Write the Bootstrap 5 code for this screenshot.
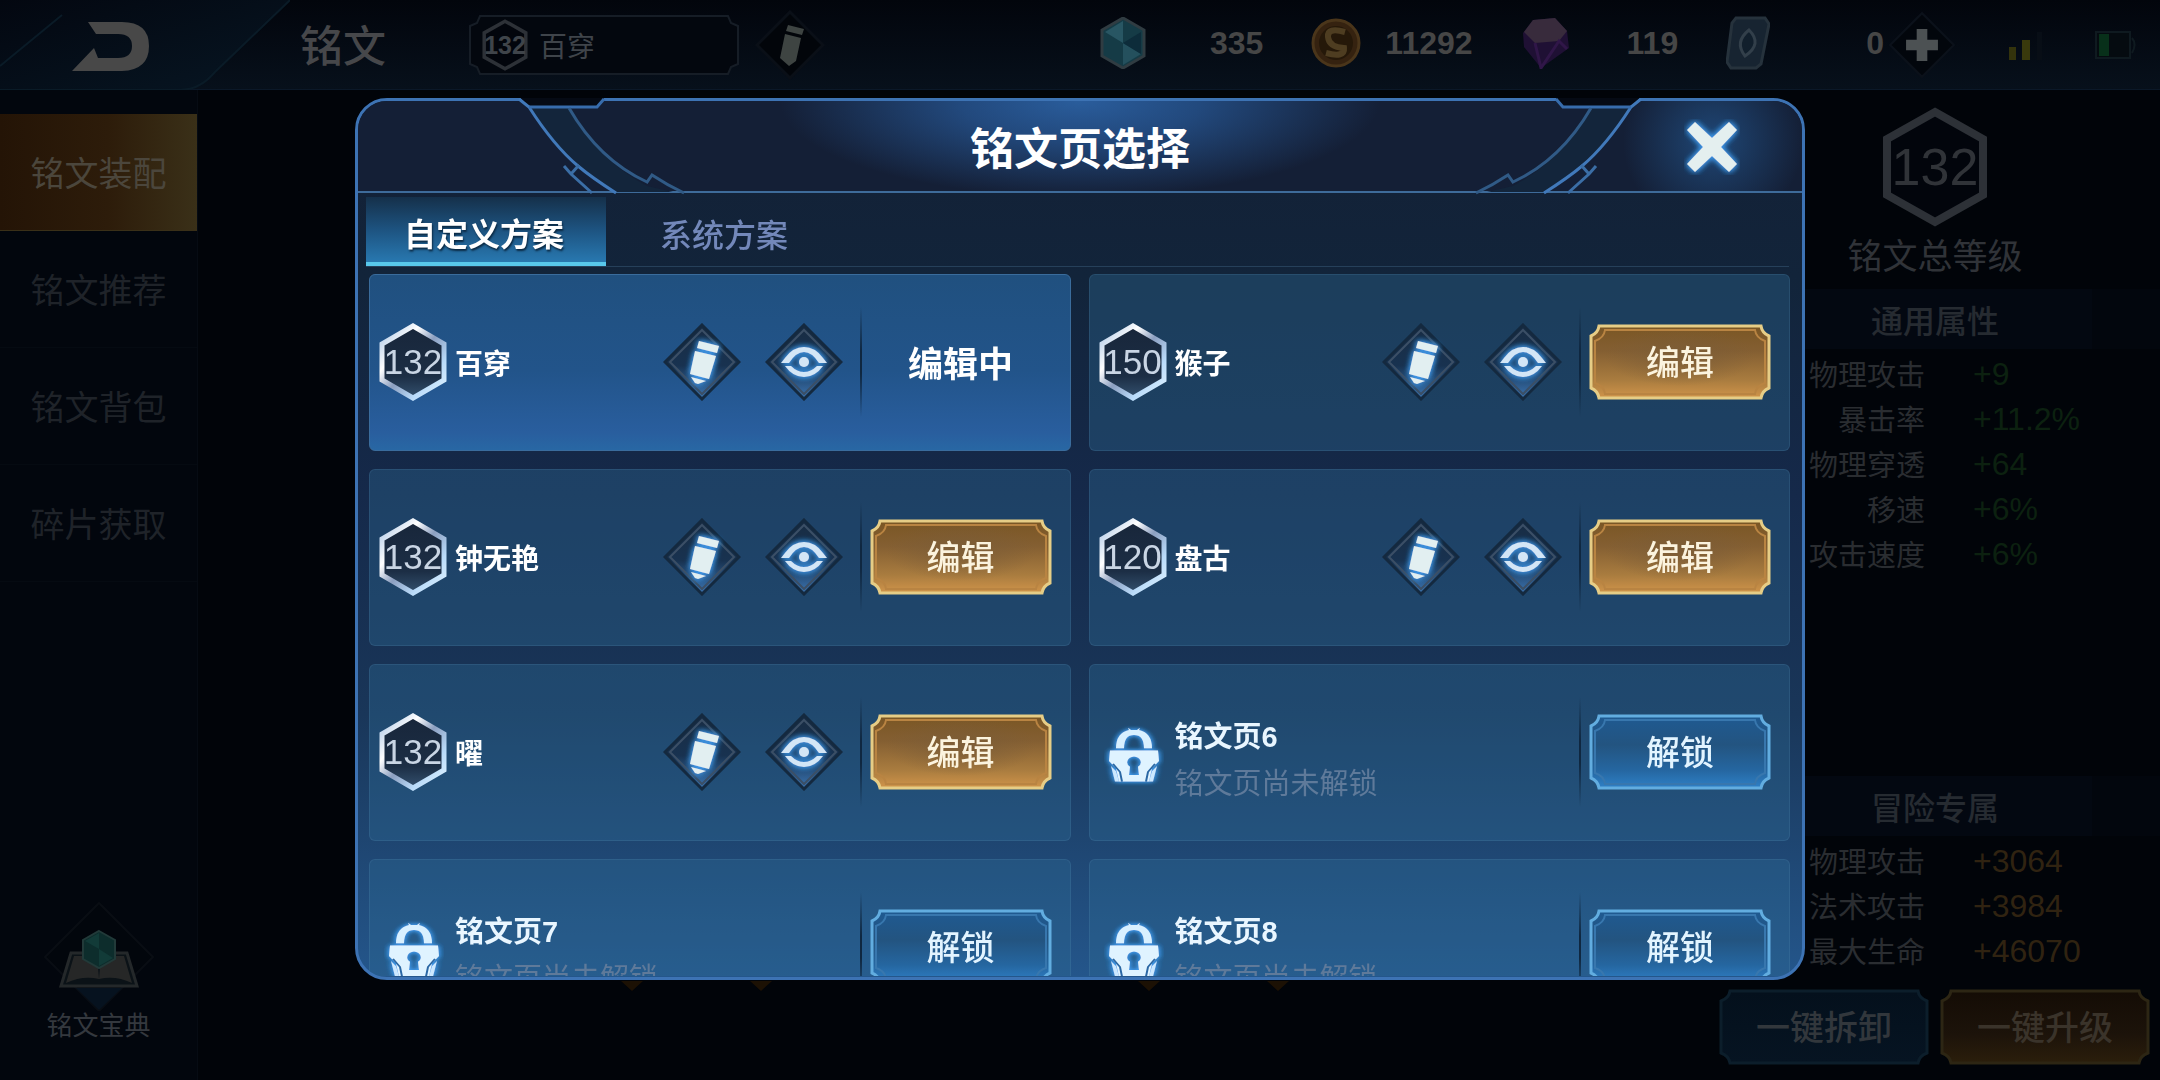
<!DOCTYPE html>
<html lang="zh-CN">
<head>
<meta charset="utf-8">
<meta name="viewport" content="width=device-width, initial-scale=1">
<title>铭文页选择</title>
<link rel="stylesheet" href="https://cdn.jsdelivr.net/npm/bootstrap@5.3.0/dist/css/bootstrap.min.css">
<style>
:root { --cjk: "Noto Sans CJK SC", sans-serif; --latin: "Liberation Sans", "Noto Sans CJK SC", sans-serif; }
body { background: #010409; font-family: var(--cjk); color: #34373b; overflow: hidden; }
svg { display: block; flex: none; }
button { font-family: inherit; }
.btn-plain { background: none; border: 0; padding: 0; color: inherit; }

/* top bar */
.topbar { height: 90px; background: linear-gradient(#02050c, #07101b); border-bottom: 1px solid #0b1828; position: relative; }
.back-link { width: 300px; height: 90px; }
.page-title { font-size: 43px; line-height: 60px; font-weight: 500; color: #46474a; margin: 0 0 4px; width: 169px; }
.page-pick { width: 270px; height: 60px; position: relative; margin-right: 16px; padding-left: 12px; }
.page-pick > svg:first-child { position: absolute; left: 0; top: 0; }
.pick-input { position: relative; background: none; border: 0; color: #3f444a; font-size: 28px; line-height: 40px; width: 170px; padding: 0; margin-left: 10px; outline: 0; }
.level-hex { position: relative; display: flex; align-items: center; justify-content: center; flex: none; }
.level-hex svg { position: absolute; left: 0; top: 0; }
.level-hex span { position: relative; font-family: var(--latin); white-space: nowrap; }
.hex-s { width: 48px; height: 52px; } .hex-s span { font-size: 25px; line-height: 28px; font-weight: 700; color: #3f444a; }
.wallet { font: 700 32px/40px var(--latin); color: #464646; padding-bottom: 4px; }
.coin { display: flex; align-items: center; justify-content: space-between; }
.status { width: 276px; padding-left: 35px; }

/* side menu */
.side-menu { width: 198px; padding-top: 24px; border-right: 1px solid #060b13; background: #02060d; }
.side-menu a { height: 117px; font-size: 34px; line-height: 48px; color: #1f2329; text-decoration: none; display: flex; align-items: center; justify-content: center; border-bottom: 1px solid #050a11; }
.side-menu a.active { background: linear-gradient(90deg, #241406, #2d1c0a 55%, #3a3018); color: #4b463c; border-color: #3a3018; }
.side-menu a.codex { margin-top: auto; height: auto; font-size: 26px; line-height: 36px; color: #34383e; border: 0; flex-direction: column; margin-bottom: 38px; }
.codex svg { margin-bottom: -5px; }

/* rune tray behind the dialog */
.rune-tray { padding: 0 66px 89px 0; }

/* attribute panel */
.attr-panel { width: 382px; padding: 17px 0 15px; }
.attr-head { width: 314px; }
.hex-l { width: 106px; height: 120px; } .hex-l span { font-size: 52px; line-height: 60px; color: #303338; }
.total-label { font-size: 35px; line-height: 50px; color: #303338; margin-top: 2px; margin-bottom: 2px; }
.sect { font-size: 32px; line-height: 46px; padding: 7px 0; width: 314px; color: #262b31; background: #030811; margin: 0 0 2px; text-align: center; box-shadow: 68px 0 #02060d; }
.attr-row { display: flex; height: 45px; align-items: center; font-size: 29px; }
.attr-row dt { width: 147px; text-align: right; font-weight: 400; color: #2a2d31; }
.attr-row dd { margin: 0 0 0 48px; font: 32px/40px var(--latin); color: #0c2110; }
.attr-row.gold dd { color: #302311; }
.sect-low { margin-top: 200px; }
.foot-row { margin-top: auto; gap: 11px; margin-left: -59px; }

/* framed buttons */
.frame-btn { position: relative; width: 182px; height: 76px; border: 0; padding: 0 0 2px; background: none; font-size: 34px; line-height: 48px; font-weight: 500; color: #fbf3de; flex: none; }
.frame-btn svg { position: absolute; inset: 0; width: 100%; height: 100%; }
.frame-btn span { position: relative; }
.frame-btn.blue { color: #e2f4ff; }
.frame-btn.dim { width: 210px; color: #32373c; }
.frame-btn.dim.gold { color: #3a332a; }

/* dialog */
.overlay { position: fixed; inset: 0; padding: 98px 24px 0; z-index: 10; }
.rune-dialog { position: relative; width: 100%; max-width: 1450px; height: calc(100vh - 198px); margin: 0 auto; border: 3px solid #3d73b4; border-radius: 32px; overflow: hidden; display: flex; flex-direction: column;
  background: linear-gradient(#132036 0, #12243a 20%, #15294a 45%, #193659 70%, #24568b 100%); }
.frame-wrap { position: relative; max-width: 1450px; margin: 0 auto; }
.decor { position: absolute; top: 0; z-index: 2; pointer-events: none; }
.decor-l { left: 0; } .decor-r { right: 0; }
.dlg-head { height: 92px; flex: none; position: relative; border-bottom: 2px solid #3e6b9a;
  background: radial-gradient(ellipse 300px 96px at 50% 0, #2a5d9c 0, #22497d 40%, transparent 100%), radial-gradient(ellipse 90px 90px at 1355px 40px, #1f4776, transparent), #141f36; }
.dlg-head h2 { font-size: 44px; line-height: 60px; font-weight: 700; color: #fff; margin: 0; }
.close-x { position: absolute; right: 62px; top: 18px; width: 56px; height: 56px; }
.plan-tabs { margin: 4px 13px 0 8px; border-bottom: 1px solid #26405a; flex: none; }
.plan-tabs button { height: 69px; width: 240px; font-size: 32px; line-height: 46px; color: #7388ba; font-weight: 500; border: 0; background: none; padding: 2px 4px 0 0; }
.plan-tabs button.active { color: #fff; font-weight: 700; background: linear-gradient(#15304a, #1d5380 50%, #2878b0); border-bottom: 4px solid #58c8ec; padding-top: 5px; text-shadow: 1px 2px 2px #0b2a44; }
.plan-list { margin: 7px 12px 1px 11px; overflow: hidden; flex: 1; min-height: 0; display: grid; grid-template-columns: 1fr 1fr; grid-auto-rows: 177px; gap: 18px; }
.plan { border-radius: 6px; border: 1px solid rgba(90,140,180,.2); background: rgba(44,104,146,.38); display: flex; align-items: center; padding: 0 18px 2px 8px; color: #fff; }
.plan.current { background: linear-gradient(#20507f, #22548a 55%, #295e9e 90%, #2867a4); border-color: #3a6c9c; }
.plan.locked { padding-left: 14px; }
.hex-m { width: 70px; height: 78px; } .hex-m span { font-size: 35px; line-height: 40px; color: #c9d5e4; }
.plan-name { font-size: 28px; line-height: 40px; font-weight: 700; margin-left: 7px; }
.plan-lock { margin: 6px 7px 0 0; }
.plan.locked .lock-text { padding-top: 14px; }
.plan.locked .plan-name { font-size: 29px; line-height: 42px; margin: 0; color: #e9f6ff; font-family: var(--latin); }
.plan-note { font-size: 29px; line-height: 42px; color: #5f7a9a; margin-top: 2px; }
.plan-rule { width: 2px; height: 110px; margin: 0 8px 0 17px; background: linear-gradient(transparent, #0f2740 40%, #0f2740 60%, transparent); flex: none; }
.plan-state { width: 182px; text-align: center; font-size: 35px; line-height: 50px; font-weight: 700; }
.icon-pair { gap: 24px; }
</style>
<script src="https://cdn.jsdelivr.net/npm/bootstrap@5.3.0/dist/js/bootstrap.bundle.min.js"></script>
</head>
<body>
<svg width="0" height="0" class="position-absolute" aria-hidden="true">
  <defs>
    <linearGradient id="silver" x1="0" y1="0" x2="1" y2="1"><stop offset="0" stop-color="#a9c4e4"/><stop offset=".3" stop-color="#fff"/><stop offset=".5" stop-color="#8c9fc0"/><stop offset=".75" stop-color="#b9dbfa"/><stop offset="1" stop-color="#e3f4ff"/></linearGradient>
    <linearGradient id="hexin" x1="0" y1="0" x2="0" y2="1"><stop offset="0" stop-color="#18263a"/><stop offset=".7" stop-color="#1c2e45"/><stop offset="1" stop-color="#34516f"/></linearGradient>
    <linearGradient id="diaFill" x1="0" y1="0" x2="0" y2="1"><stop offset="0" stop-color="#182c43"/><stop offset=".55" stop-color="#183250"/><stop offset="1" stop-color="#3c76b4"/></linearGradient>
    <linearGradient id="goldFill" x1="0" y1="0" x2="0" y2="1"><stop offset="0" stop-color="#7a5624"/><stop offset=".35" stop-color="#845f32"/><stop offset=".75" stop-color="#a97c3f"/><stop offset="1" stop-color="#d0944a"/></linearGradient>
    <radialGradient id="goldDark"><stop offset="0" stop-color="#7a5c38" stop-opacity=".8"/><stop offset="1" stop-color="#7a5c38" stop-opacity="0"/></radialGradient>
    <linearGradient id="blueFill" x1="0" y1="0" x2="0" y2="1"><stop offset="0" stop-color="#1f5a92"/><stop offset=".4" stop-color="#235480"/><stop offset=".75" stop-color="#2566a0"/><stop offset="1" stop-color="#2f80c6"/></linearGradient>
    <linearGradient id="goldDim" x1="0" y1="0" x2="0" y2="1"><stop offset="0" stop-color="#140c05"/><stop offset=".6" stop-color="#1c130a"/><stop offset="1" stop-color="#2b1e0b"/></linearGradient>
    <linearGradient id="blueDim" x1="0" y1="0" x2="0" y2="1"><stop offset="0" stop-color="#04101c"/><stop offset="1" stop-color="#061422"/></linearGradient>
    <linearGradient id="backFill" x1="0" y1="0" x2="1" y2="1"><stop offset="0" stop-color="#030710"/><stop offset="1" stop-color="#071623"/></linearGradient>
    <filter id="glow" x="-40%" y="-40%" width="180%" height="180%"><feGaussianBlur stdDeviation="3" result="b"/><feMerge><feMergeNode in="b"/><feMergeNode in="SourceGraphic"/></feMerge></filter>
    <filter id="blueGlow" x="-40%" y="-40%" width="180%" height="180%"><feGaussianBlur stdDeviation="3" result="b"/><feFlood flood-color="#3f9cf0"/><feComposite in2="b" operator="in" result="c"/><feMerge><feMergeNode in="c"/><feMergeNode in="c"/><feMergeNode in="SourceGraphic"/></feMerge></filter>
    <symbol id="hex" viewBox="0 0 70 78"><path d="M35 3 66 21V57L35 75 4 57V21Z" fill="url(#hexin)" stroke="url(#silver)" stroke-width="5"/></symbol>
    <symbol id="hexDim" viewBox="0 0 106 120"><path d="M53 5 101 32V88L53 115 5 88V32Z" fill="#02050c" stroke="#2d3137" stroke-width="8"/></symbol>
    <symbol id="pencil" viewBox="0 0 78 78"><path d="M39 2 76 39 39 76 2 39Z" fill="url(#diaFill)" stroke="#14293f" stroke-width="3"/><path d="M39 7 71 39 39 71 7 39Z" fill="none" stroke="#3b4f66" stroke-width="2"/><g fill="#e2eff1" filter="url(#blueGlow)"><path d="M36 18 56 23 54 30 34 25Z"/><path d="M32 28 53 33 46 56 27 51Z"/><path d="M28 54 43 58 35 61 32 60Z"/></g></symbol>
    <symbol id="eye" viewBox="0 0 78 78"><path d="M39 2 76 39 39 76 2 39Z" fill="url(#diaFill)" stroke="#14293f" stroke-width="3"/><path d="M39 7 71 39 39 71 7 39Z" fill="none" stroke="#3b4f66" stroke-width="2"/><g fill="#d3e6f6" filter="url(#blueGlow)"><circle cx="39" cy="39" r="5"/><path d="M16 40 20 35Q28 24 39 24T58 35L62 40H54Q47 29 39 29T24 40Z"/><path d="M20 43H26Q32 49 39 49T52 43H58Q50 54 39 54T20 43Z"/></g></symbol>
    <symbol id="lock" viewBox="0 0 60 84" preserveAspectRatio="none"><g filter="url(#blueGlow)"><path d="M12 33Q12 12 25 8L24 5 22 3 27 8H33L38 3 36 5 35 8Q48 12 48 33H40Q40 15 30 15T20 33Z" fill="#d8f0ff"/><path fill="#dff3ff" fill-rule="evenodd" d="M6 36H54L55 50 48 60 45 78H15L12 60 5 50ZM30 44A8 8 0 0 0 26 58L25 69H35L34 58A8 8 0 0 0 30 44Z"/><path d="M7 57 12 64 15 78H11ZM53 57 48 64 45 78H49Z" fill="#cbe8ff"/></g><path d="M9 54 16 65 18 78M51 54 44 65 42 78" fill="none" stroke="#2a67a4" stroke-width="2"/></symbol>
    <symbol id="goldFrame" viewBox="0 0 182 76" preserveAspectRatio="none"><path d="M10 2H172Q173 9 180 12V64Q173 67 172 74H10Q9 67 2 64V12Q9 9 10 2Z" fill="url(#goldFill)" stroke="#e6cd86" stroke-width="3"/><ellipse cx="91" cy="32" rx="75" ry="30" fill="url(#goldDark)"/><path d="M16 6H166Q167 14 176 17V59Q167 62 166 70H16Q15 62 6 59V17Q15 14 16 6Z" fill="none" stroke="#b98442" stroke-width="2"/></symbol>
    <symbol id="blueFrame" viewBox="0 0 182 76" preserveAspectRatio="none"><path d="M10 2H172Q173 9 180 12V64Q173 67 172 74H10Q9 67 2 64V12Q9 9 10 2Z" fill="url(#blueFill)" stroke="#62ade0" stroke-width="3"/><path d="M16 6H166Q167 14 176 17V59Q167 62 166 70H16Q15 62 6 59V17Q15 14 16 6Z" fill="none" stroke="#3877ae" stroke-width="2"/></symbol>
    <symbol id="goldFrameDim" viewBox="0 0 210 76" preserveAspectRatio="none"><path d="M11 2H199Q200 9 208 12V64Q200 67 199 74H11Q10 67 2 64V12Q10 9 11 2Z" fill="url(#goldDim)" stroke="#2d2614" stroke-width="3"/></symbol>
    <symbol id="blueFrameDim" viewBox="0 0 210 76" preserveAspectRatio="none"><path d="M11 2H199Q200 9 208 12V64Q200 67 199 74H11Q10 67 2 64V12Q10 9 11 2Z" fill="url(#blueDim)" stroke="#0c1e2b" stroke-width="3"/></symbol>
    <symbol id="corner" viewBox="0 0 340 98"><path d="M164 -1H250L242 8H174Z" fill="#050a14"/><path d="M174 9H214Q240 60 292 88L318 94H261Q205 60 174 9Z" fill="#13253b"/><path d="M164 1 174 9C190 34 204 52 223 68 236 79 250 88 261 95" fill="none" stroke="#4179ba" stroke-width="3"/><path d="M174 9H242L249 1" fill="none" stroke="#376cac" stroke-width="3"/><path d="M214 10Q244 62 292 84L297 77Q312 87 329 95" fill="none" stroke="#305a86" stroke-width="3"/><path d="M209 68 216 76 237 95M216 76 224 67" fill="none" stroke="#3b6ea6" stroke-width="3"/></symbol>
  </defs>
</svg>

<div class="vh-100 d-flex flex-column">
  <header class="topbar d-flex align-items-center">
    <a href="#" class="back-link" aria-label="返回"><svg width="290" height="90" viewBox="0 0 290 90"><path d="M0 0H290L215 72Q200 90 180 90H0Z" fill="url(#backFill)"/><path d="M290 0 215 72Q200 90 180 90H0M0 66 62 15" fill="none" stroke="#0a1b27" stroke-width="2"/><path d="M88 22H122Q149 22 149 46T122 71H72L94 48 98 58H118Q132 58 132 46T118 34H96Z" fill="#484848"/></svg></a>
    <h1 class="page-title">铭文</h1>
    <div class="page-pick d-flex align-items-center">
      <svg width="270" height="60" viewBox="0 0 270 60"><path d="M11 1H259L262 8 269 11V49L262 52 259 59H11L8 52 1 49V11L8 8Z" fill="#03070e" stroke="#161d26" stroke-width="2"/></svg>
      <span class="level-hex hex-s"><svg width="48" height="52"><use href="#hexDim"/></svg><span>132</span></span>
      <input class="pick-input" type="text" value="百穿" aria-label="铭文页名称">
    </div>
    <button class="btn-plain" aria-label="重命名"><svg width="70" height="70" viewBox="0 0 70 70"><path d="M35 2 68 35 35 68 2 35Z" fill="#02050a" stroke="#0a0f17" stroke-width="3"/><path d="M33 15 49 19 47 25 31 21ZM30 24 46 28 41 51 34 56 25 48Z" fill="#3e4442"/></svg></button>
    <div class="wallet d-flex ms-auto align-items-center">
      <div class="coin me-5"><svg width="46" height="52" viewBox="0 0 46 52"><path d="M23 1 44 13V39L23 51 2 39V13Z" fill="#153b46" stroke="#303c42" stroke-width="3"/><path d="M23 4V26L5 15Z" fill="#285663"/><path d="M23 26 41 37 23 48Z" fill="#24505d"/><path d="M23 26 41 15V37Z" fill="#0d2c3a"/></svg><span class="ps-5 ms-3">335</span></div>
      <div class="coin me-5"><svg width="50" height="52" viewBox="0 0 50 52"><circle cx="25" cy="26" r="23" fill="#352210" stroke="#4a351a" stroke-width="3"/><circle cx="25" cy="26" r="17" fill="#251809"/><path d="M34 15Q16 10 17 20T33 31Q34 41 15 36" fill="none" stroke="#4e3d21" stroke-width="6"/></svg><span class="ps-4">11292</span></div>
      <div class="coin me-5"><svg width="50" height="52" viewBox="0 0 50 52"><path d="M2 16 12 3 34 1 46 14 48 31 20 51 3 30Z" fill="#1f1034"/><path d="M3 15 12 3 34 1 46 14 38 24 14 26Z" fill="#382b3c"/><path d="M14 26 20 51 38 24 46 32" fill="none" stroke="#301648" stroke-width="3"/></svg><span class="ps-5 ms-2">119</span></div>
      <div class="coin"><svg width="44" height="54" viewBox="0 0 44 54"><path d="M10 2H39L43 8 35 48 30 52H5L1 46 6 7Z" fill="#172431" stroke="#26323c" stroke-width="3"/><path d="M23 14Q37 28 19 40 8 26 23 14Z" fill="#111f2c" stroke="#323f4a" stroke-width="3"/></svg><span class="ps-5 ms-5">0</span></div>
    </div>
    <div class="status d-flex align-items-center ps-1">
      <button class="btn-plain" aria-label="添加"><svg width="68" height="68" viewBox="0 0 64 64"><path d="M32 2 62 32 32 62 2 32Z" fill="#02060c" stroke="#0b111a" stroke-width="2"/><path d="M27 17H37V27H47V37H37V47H27V37H17V27H27Z" fill="#4c5153"/></svg></button>
      <svg class="ms-5" width="42" height="30" viewBox="0 0 42 30"><path d="M5 17H12V30H5Z" fill="#33330c"/><path d="M18 10H26V30H18Z" fill="#39390c"/><path d="M33 2H38V30H33Z" fill="#080e16"/></svg>
      <svg class="ms-5" width="46" height="30" viewBox="0 0 46 30"><path d="M2 2H36V28H2Z" fill="#050b10" stroke="#0f1a20" stroke-width="2"/><path d="M5 4H15V26H5Z" fill="#08301a"/><path d="M38 8Q43 14 38 23" fill="none" stroke="#0f1a20" stroke-width="2"/></svg>
    </div>
  </header>

  <div class="d-flex flex-grow-1">
    <nav class="side-menu d-flex flex-column">
      <a href="#" class="active">铭文装配</a>
      <a href="#">铭文推荐</a>
      <a href="#">铭文背包</a>
      <a href="#">碎片获取</a>
      <a href="#" class="codex"><svg width="112" height="110" viewBox="0 0 112 110"><path d="M56 2 110 56 56 110 2 56Z" fill="#02060c" stroke="#090d13" stroke-width="2"/><path d="M33 87H79L56 109Z" fill="#06121f"/><path d="M28 52H84L94 85H18Z" fill="#0b1217" stroke="#24282a" stroke-width="3"/><path d="M31 55H54L56 78Q40 74 23 82ZM58 55H81L89 82Q72 74 56 78Z" fill="#262727"/><path d="M56 30 72 39V58L56 67 40 58V39Z" fill="#0d2d2c" stroke="#223a39" stroke-width="2"/><path d="M56 32V48L42 40ZM56 48 70 57 56 65Z" fill="#123b38"/></svg><span>铭文宝典</span></a>
    </nav>
    <main class="rune-tray flex-grow-1 d-flex justify-content-center align-items-end">
      <svg width="668" height="10" viewBox="0 0 668 10" aria-hidden="true"><path d="M0 0H22L11 10ZM129 0H151L140 10ZM517 0H539L528 10ZM646 0H668L657 10Z" fill="#1c1104"/></svg>
    </main>
    <aside class="attr-panel d-flex flex-column">
      <div class="attr-head d-flex flex-column align-items-center">
        <span class="level-hex hex-l"><svg width="106" height="120"><use href="#hexDim"/></svg><span>132</span></span>
        <div class="total-label">铭文总等级</div>
      </div>
      <h2 class="sect mt-2">通用属性</h2>
      <dl class="m-0">
        <div class="attr-row"><dt>物理攻击</dt><dd>+9</dd></div>
        <div class="attr-row"><dt>暴击率</dt><dd>+11.2%</dd></div>
        <div class="attr-row"><dt>物理穿透</dt><dd>+64</dd></div>
        <div class="attr-row"><dt>移速</dt><dd>+6%</dd></div>
        <div class="attr-row"><dt>攻击速度</dt><dd>+6%</dd></div>
      </dl>
      <h2 class="sect sect-low">冒险专属</h2>
      <dl class="m-0">
        <div class="attr-row gold"><dt>物理攻击</dt><dd>+3064</dd></div>
        <div class="attr-row gold"><dt>法术攻击</dt><dd>+3984</dd></div>
        <div class="attr-row gold"><dt>最大生命</dt><dd>+46070</dd></div>
      </dl>
      <div class="foot-row d-flex">
        <button class="frame-btn dim"><svg><use href="#blueFrameDim"/></svg><span>一键拆卸</span></button>
        <button class="frame-btn dim gold"><svg><use href="#goldFrameDim"/></svg><span>一键升级</span></button>
      </div>
    </aside>
  </div>
</div>

<div class="overlay">
 <div class="frame-wrap">
  <svg class="decor decor-l" width="340" height="98"><use href="#corner"/></svg>
  <svg class="decor decor-r" width="340" height="98" viewBox="0 0 340 98"><g transform="translate(340 0) scale(-1 1)"><use href="#corner" width="340" height="98"/></g></svg>
  <section class="rune-dialog" role="dialog" aria-labelledby="dlgTitle">
    <div class="dlg-head d-flex align-items-center justify-content-center">
      <h2 id="dlgTitle">铭文页选择</h2>
      <button class="btn-plain close-x" aria-label="关闭"><svg width="56" height="56" viewBox="0 0 56 56"><path d="M11 3 28 19 45 3 53 11 37 28 53 45 45 53 28 37 11 53 3 45 19 28 3 11Z" fill="#e4efef" filter="url(#blueGlow)"/></svg></button>
    </div>
    <div class="plan-tabs d-flex" role="tablist">
      <button class="active" role="tab" aria-selected="true">自定义方案</button>
      <button role="tab" aria-selected="false">系统方案</button>
    </div>
    <div class="plan-list">
      <article class="plan current"><span class="level-hex hex-m"><svg width="70" height="78"><use href="#hex"/></svg><span>132</span></span><span class="plan-name">百穿</span><div class="icon-pair d-flex ms-auto"><button class="btn-plain" aria-label="重命名"><svg width="78" height="78"><use href="#pencil"/></svg></button><button class="btn-plain" aria-label="查看"><svg width="78" height="78"><use href="#eye"/></svg></button></div><div class="plan-rule"></div><span class="plan-state">编辑中</span></article>
      <article class="plan"><span class="level-hex hex-m"><svg width="70" height="78"><use href="#hex"/></svg><span>150</span></span><span class="plan-name">猴子</span><div class="icon-pair d-flex ms-auto"><button class="btn-plain" aria-label="重命名"><svg width="78" height="78"><use href="#pencil"/></svg></button><button class="btn-plain" aria-label="查看"><svg width="78" height="78"><use href="#eye"/></svg></button></div><div class="plan-rule"></div><button class="frame-btn"><svg><use href="#goldFrame"/></svg><span>编辑</span></button></article>
      <article class="plan"><span class="level-hex hex-m"><svg width="70" height="78"><use href="#hex"/></svg><span>132</span></span><span class="plan-name">钟无艳</span><div class="icon-pair d-flex ms-auto"><button class="btn-plain" aria-label="重命名"><svg width="78" height="78"><use href="#pencil"/></svg></button><button class="btn-plain" aria-label="查看"><svg width="78" height="78"><use href="#eye"/></svg></button></div><div class="plan-rule"></div><button class="frame-btn"><svg><use href="#goldFrame"/></svg><span>编辑</span></button></article>
      <article class="plan"><span class="level-hex hex-m"><svg width="70" height="78"><use href="#hex"/></svg><span>120</span></span><span class="plan-name">盘古</span><div class="icon-pair d-flex ms-auto"><button class="btn-plain" aria-label="重命名"><svg width="78" height="78"><use href="#pencil"/></svg></button><button class="btn-plain" aria-label="查看"><svg width="78" height="78"><use href="#eye"/></svg></button></div><div class="plan-rule"></div><button class="frame-btn"><svg><use href="#goldFrame"/></svg><span>编辑</span></button></article>
      <article class="plan"><span class="level-hex hex-m"><svg width="70" height="78"><use href="#hex"/></svg><span>132</span></span><span class="plan-name">曜</span><div class="icon-pair d-flex ms-auto"><button class="btn-plain" aria-label="重命名"><svg width="78" height="78"><use href="#pencil"/></svg></button><button class="btn-plain" aria-label="查看"><svg width="78" height="78"><use href="#eye"/></svg></button></div><div class="plan-rule"></div><button class="frame-btn"><svg><use href="#goldFrame"/></svg><span>编辑</span></button></article>
      <article class="plan locked"><svg class="plan-lock" width="60" height="62"><use href="#lock"/></svg><div class="lock-text ms-1"><div class="plan-name">铭文页6</div><div class="plan-note">铭文页尚未解锁</div></div><div class="plan-rule ms-auto"></div><button class="frame-btn blue"><svg><use href="#blueFrame"/></svg><span>解锁</span></button></article>
      <article class="plan locked"><svg class="plan-lock" width="60" height="62"><use href="#lock"/></svg><div class="lock-text ms-1"><div class="plan-name">铭文页7</div><div class="plan-note">铭文页尚未解锁</div></div><div class="plan-rule ms-auto"></div><button class="frame-btn blue"><svg><use href="#blueFrame"/></svg><span>解锁</span></button></article>
      <article class="plan locked"><svg class="plan-lock" width="60" height="62"><use href="#lock"/></svg><div class="lock-text ms-1"><div class="plan-name">铭文页8</div><div class="plan-note">铭文页尚未解锁</div></div><div class="plan-rule ms-auto"></div><button class="frame-btn blue"><svg><use href="#blueFrame"/></svg><span>解锁</span></button></article>
    </div>
  </section>
 </div>
</div>
</body>
</html>
